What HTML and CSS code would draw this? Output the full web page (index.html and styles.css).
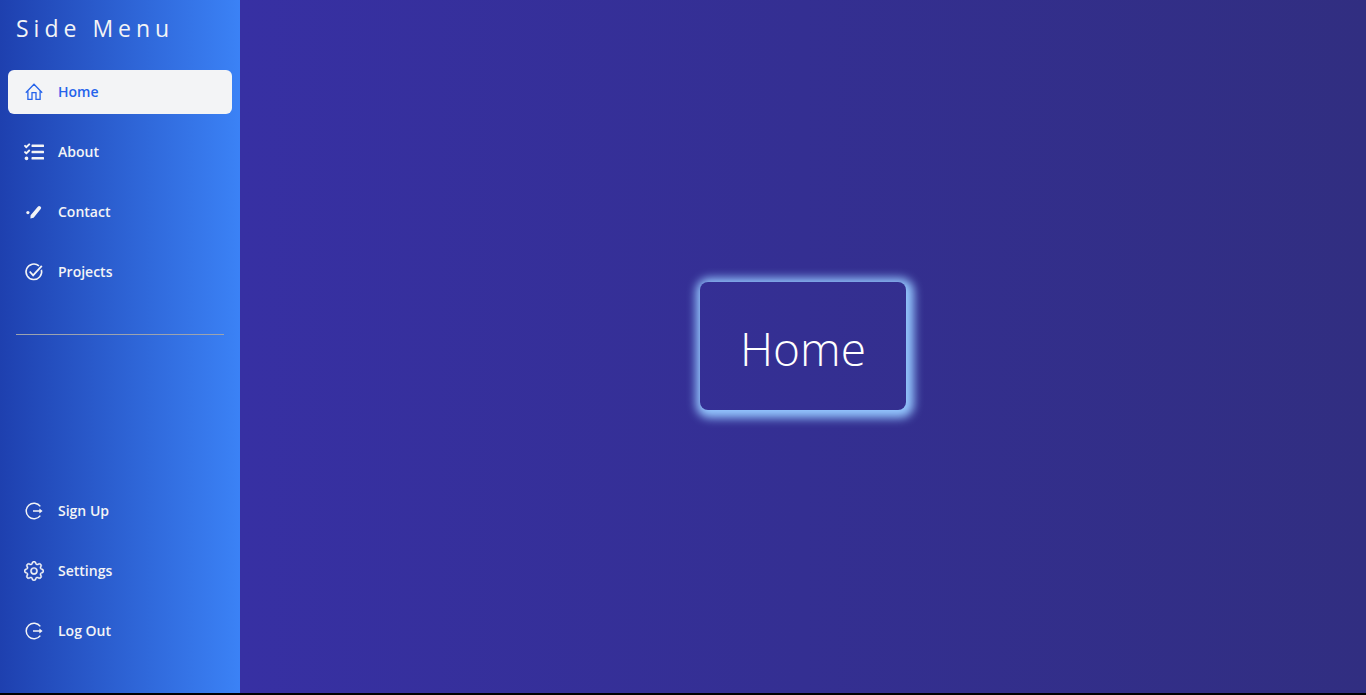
FILE: index.html
```html
<!DOCTYPE html>
<html lang="en">
<head>
<meta charset="utf-8">
<title>Side Menu</title>
<meta name="viewport" content="width=device-width, initial-scale=1">
<link rel="stylesheet" href="styles.css">
</head>
<body>
<div class="app">
  <aside class="sidebar">
    <h2 class="title">Side Menu</h2>
    <nav class="menu" aria-label="Main">
      <a class="item active" href="#home" aria-current="page">
        <svg class="icon" viewBox="0 0 20 20" fill="none" stroke="currentColor" stroke-width="1.3"><path d="M1.8 10.7 10 2.3l8.2 8.4M3.9 9.3v8.1H8v-6.8h4v6.8h4.1V9.3"/></svg>
        <span>Home</span>
      </a>
      <a class="item" href="#about">
        <svg class="icon" viewBox="0 0 512 512" fill="currentColor"><path d="M139.61 35.5a12 12 0 0 0-17 0L58.93 98.81l-22.7-22.12a12 12 0 0 0-17 0L3.53 92.41a12 12 0 0 0 0 17l47.59 47.4a12.78 12.78 0 0 0 17.61 0l15.59-15.62L156.52 69a12.09 12.09 0 0 0 .09-17zm0 159.19a12 12 0 0 0-17 0l-63.68 63.72-22.7-22.1a12 12 0 0 0-17 0L3.53 252a12 12 0 0 0 0 17L51 316.5a12.77 12.77 0 0 0 17.6 0l15.7-15.69 72.2-72.22a12 12 0 0 0 .09-16.9zM64 368c-26.49 0-48.59 21.5-48.59 48S37.53 464 64 464a48 48 0 0 0 0-96zm432 16H208a16 16 0 0 0-16 16v32a16 16 0 0 0 16 16h288a16 16 0 0 0 16-16v-32a16 16 0 0 0-16-16zm0-320H208a16 16 0 0 0-16 16v32a16 16 0 0 0 16 16h288a16 16 0 0 0 16-16V80a16 16 0 0 0-16-16zm0 160H208a16 16 0 0 0-16 16v32a16 16 0 0 0 16 16h288a16 16 0 0 0 16-16v-32a16 16 0 0 0-16-16z"/></svg>
        <span>About</span>
      </a>
      <a class="item" href="#contact">
        <svg class="icon" viewBox="0 0 20 20" fill="currentColor"><circle cx="3.9" cy="10.6" r="1.6"/><path d="M6.4 16.5 6.6 13.2 13.8 4.7a1.8 1.8 0 0 1 2.9 2.3l-7.1 8.7z"/></svg>
        <span>Contact</span>
      </a>
      <a class="item" href="#projects">
        <svg class="icon" viewBox="0 0 20 20" fill="none" stroke="currentColor" stroke-width="1.5"><path d="M15 3.9A7.8 7.8 0 1 0 17.4 7.8"/><path d="m5.7 9.5 3.4 3.8 8.7-9.5" stroke-width="1.8"/></svg>
        <span>Projects</span>
      </a>
    </nav>
    <hr class="divider">
    <nav class="menu account" aria-label="Account">
      <a class="item" href="#signup">
        <svg class="icon" viewBox="0 0 20 20" fill="none" stroke="currentColor" stroke-width="1.5"><path d="M16.3 5.4a7.8 7.8 0 1 0 0 9.2M9 10h7"/><path d="M15.4 7.6 18.6 10l-3.2 2.4z" fill="currentColor" stroke="none"/></svg>
        <span>Sign Up</span>
      </a>
      <a class="item" href="#settings">
        <svg class="icon" viewBox="0 0 16 16" fill="currentColor" stroke="currentColor" stroke-width=".3"><path d="M8 5.1a2.9 2.9 0 1 0 0 5.8 2.9 2.9 0 0 0 0-5.8zM6.1 8a1.9 1.9 0 1 1 3.8 0 1.9 1.9 0 0 1-3.8 0z"/><path d="M9.796 1.343c-.527-1.79-3.065-1.79-3.592 0l-.094.319a.873.873 0 0 1-1.255.52l-.292-.16c-1.64-.892-3.433.902-2.54 2.541l.159.292a.873.873 0 0 1-.52 1.255l-.319.094c-1.79.527-1.79 3.065 0 3.592l.319.094a.873.873 0 0 1 .52 1.255l-.16.292c-.892 1.64.901 3.434 2.541 2.54l.292-.159a.873.873 0 0 1 1.255.52l.094.319c.527 1.79 3.065 1.79 3.592 0l.094-.319a.873.873 0 0 1 1.255-.52l.292.16c1.64.893 3.434-.902 2.54-2.541l-.159-.292a.873.873 0 0 1 .52-1.255l.319-.094c1.79-.527 1.79-3.065 0-3.592l-.319-.094a.873.873 0 0 1-.52-1.255l.16-.292c.893-1.64-.902-3.433-2.541-2.54l-.292.159a.873.873 0 0 1-1.255-.52l-.094-.319zm-2.633.283c.246-.835 1.428-.835 1.674 0l.094.319a1.873 1.873 0 0 0 2.693 1.115l.291-.16c.764-.415 1.6.42 1.184 1.185l-.159.292a1.873 1.873 0 0 0 1.116 2.692l.318.094c.835.246.835 1.428 0 1.674l-.319.094a1.873 1.873 0 0 0-1.115 2.693l.16.291c.415.764-.42 1.6-1.185 1.184l-.291-.159a1.873 1.873 0 0 0-2.693 1.116l-.094.318c-.246.835-1.428.835-1.674 0l-.094-.319a1.873 1.873 0 0 0-2.692-1.115l-.292.16c-.764.415-1.6-.42-1.184-1.185l.159-.291A1.873 1.873 0 0 0 1.945 8.93l-.319-.094c-.835-.246-.835-1.428 0-1.674l.319-.094A1.873 1.873 0 0 0 3.06 4.377l-.16-.292c-.415-.764.42-1.6 1.185-1.184l.292.159a1.873 1.873 0 0 0 2.692-1.115l.094-.319z"/></svg>
        <span>Settings</span>
      </a>
      <a class="item" href="#logout">
        <svg class="icon" viewBox="0 0 20 20" fill="none" stroke="currentColor" stroke-width="1.5"><path d="M16.3 5.4a7.8 7.8 0 1 0 0 9.2M9 10h7"/><path d="M15.4 7.6 18.6 10l-3.2 2.4z" fill="currentColor" stroke="none"/></svg>
        <span>Log Out</span>
      </a>
    </nav>
  </aside>
  <main class="content">
    <h1 class="card">Home</h1>
  </main>
</div>
</body>
</html>
```
FILE: styles.css
```css
* {
  box-sizing: border-box;
}

body {
  margin: 0;
  background: #000;
  font-family: "Open Sans", "Noto Sans", sans-serif;
}

.app {
  display: flex;
  min-height: 100vh;
  border-bottom: 2px solid #000;
}

.sidebar {
  display: flex;
  flex-direction: column;
  flex: none;
  width: 240px;
  padding: 12px 8px 40px;
  background: linear-gradient(to right, #1e40af, #3b82f6);
  color: #f3f4f6;
}

.title {
  margin: 0 8px 26px;
  font-size: 23px;
  font-weight: 400;
  line-height: 32px;
  letter-spacing: 5px;
}

.menu {
  display: flex;
  flex-direction: column;
  gap: 16px;
}

.account {
  margin-top: auto;
}

.item {
  display: flex;
  align-items: center;
  gap: 14px;
  padding: 12px 16px;
  border-radius: 6px;
  color: inherit;
  font-size: 14px;
  font-weight: 600;
  line-height: 20px;
  text-decoration: none;
}

.active {
  background: #f3f4f6;
  color: #2563eb;
}

.icon {
  flex: none;
  width: 20px;
  height: 20px;
}

.divider {
  width: auto;
  height: 1px;
  margin: 40px 8px;
  border: 0;
  background: #9ca3af;
}

.content {
  display: flex;
  flex: 1;
  align-items: center;
  justify-content: center;
  padding-bottom: 1px;
  background: linear-gradient(to right, #3730a3, #312e81);
}

.card {
  margin: 0;
  padding: 42px 40px 38px;
  border-radius: 8px;
  box-shadow: 2px 2px 10px 6px #93c5fd;
  color: #fff;
  font-size: 46px;
  font-weight: 300;
  line-height: 48px;
}
```
